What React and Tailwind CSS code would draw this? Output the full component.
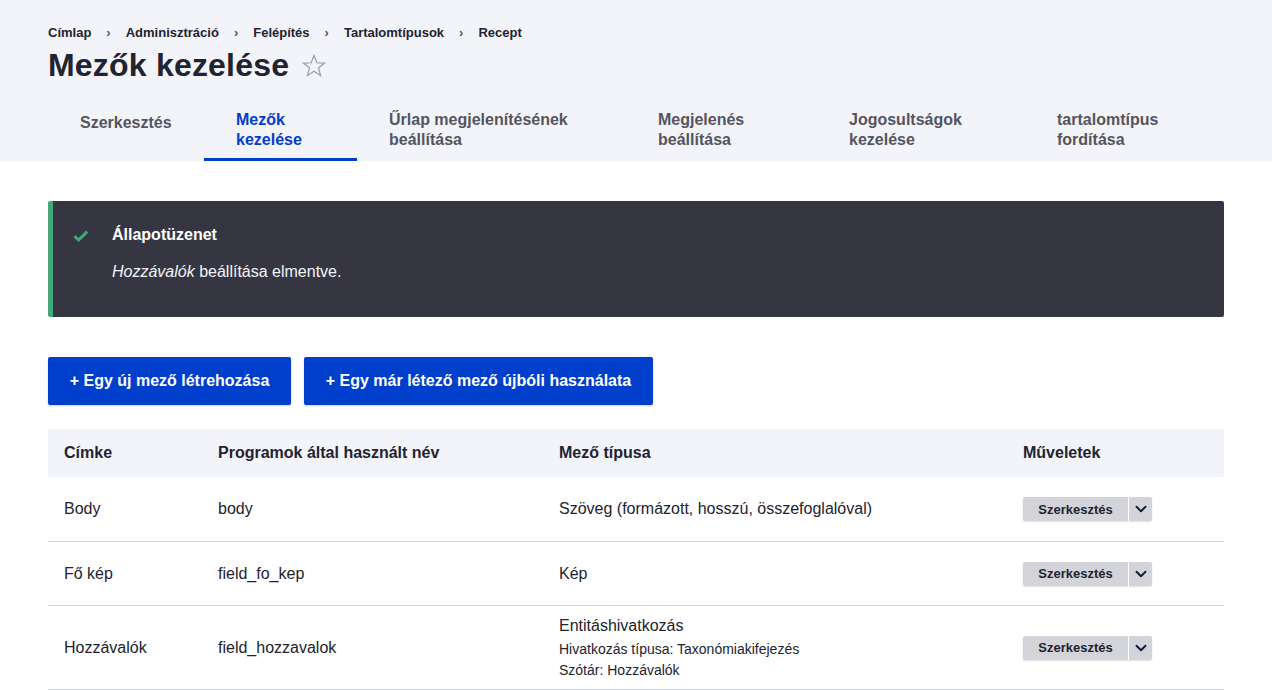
import { ChevronDown } from 'lucide-react'

const crumbs = ['Címlap', 'Adminisztráció', 'Felépítés', 'Tartalomtípusok', 'Recept']

const tabs = [
  { lines: ['Szerkesztés'], width: 'w-[156px]' },
  { lines: ['Mezők', 'kezelése'], width: 'w-[153px]', active: true },
  { lines: ['Űrlap megjelenítésének', 'beállítása'], width: 'w-[269px]' },
  { lines: ['Megjelenés', 'beállítása'], width: 'w-[191px]' },
  { lines: ['Jogosultságok', 'kezelése'], width: 'w-[208px]' },
  { lines: ['tartalomtípus', 'fordítása'], width: 'w-[199px]' }
]

const rows = [
  { label: 'Body', machine: 'body', type: 'Szöveg (formázott, hosszú, összefoglalóval)', size: 'min-h-[65px]' },
  { label: 'Fő kép', machine: 'field_fo_kep', type: 'Kép', size: 'min-h-[64px]' },
  {
    label: 'Hozzávalók',
    machine: 'field_hozzavalok',
    type: 'Entitáshivatkozás',
    extra: ['Hivatkozás típusa: Taxonómiakifejezés', 'Szótár: Hozzávalók'],
    size: 'pt-[8px] pb-[8px]'
  }
]

function Star() {
  return (
    <svg width="26" height="26" viewBox="0 0 24 24" fill="none" stroke="#9a9ca6" strokeWidth="1.1" strokeLinejoin="miter">
      <polygon points="12,2.2 14.6,9 21.8,9.3 16.1,13.8 18.1,20.9 12,16.8 5.9,20.9 7.9,13.8 2.2,9.3 9.4,9" />
    </svg>
  )
}

function Check() {
  return (
    <svg width="16" height="12" viewBox="0 0 16 12" fill="none">
      <path d="M1.5 6.2 L5.6 10 L14.2 1.6" stroke="#42a877" strokeWidth="3" />
    </svg>
  )
}

function DropButton() {
  return (
    <div className="inline-flex h-[24px] rounded-[2px] bg-[#d3d4d9] shadow-[0_1px_2px_rgba(0,0,0,0.12)]">
      <div className="w-[105px] flex items-center justify-center text-[13px] font-bold text-[#222330]">
        Szerkesztés
      </div>
      <div className="w-px bg-white" />
      <div className="w-[23px] flex items-center justify-center text-[#0f1a3a]">
        <ChevronDown className="w-[18px] h-[18px]" strokeWidth={2.5} />
      </div>
    </div>
  )
}

function App() {
  return (
    <div className="min-h-[690px] bg-white text-[#222330]" style={{ fontFamily: '"Liberation Sans", Arial, sans-serif' }}>
      {/* Header */}
      <div className="bg-[#f3f4f9] px-12 pt-[23px]">
        <nav className="flex items-center text-[13px] font-bold leading-[20px] text-[#222330]">
          {crumbs.map((c, i) => (
            <div key={c} className="flex items-center">
              <span>{c}</span>
              {i < crumbs.length - 1 && <span className="ml-[15px] mr-[15px] text-[#545560]">›</span>}
            </div>
          ))}
        </nav>
        <div className="flex items-center mt-[2px]">
          <h1 className="text-[32px] font-bold leading-[40px] tracking-[0.2px] text-[#222330]">Mezők kezelése</h1>
          <div className="ml-[12px] mt-[1px]">
            <Star />
          </div>
        </div>
        <div className="flex mt-[12px] h-[64px]">
          {tabs.map((tab) => (
            <div
              key={tab.lines.join(' ')}
              className={`${tab.width} px-8 text-base font-bold leading-[20px] ${
                tab.active ? 'text-[#003ecc] border-b-[3px] border-[#003ecc]' : 'text-[#545560]'
              } ${tab.lines.length === 1 ? 'pt-[16px]' : 'pt-[13px]'}`}
            >
              {tab.lines.map((l) => (
                <div key={l} className="whitespace-nowrap">{l}</div>
              ))}
            </div>
          ))}
        </div>
      </div>

      <div className="px-12 pt-10">
        {/* Status message */}
        <div className="flex bg-[#353641] rounded-[2px] border-l-[5px] border-[#42a877] pl-[20px] pt-[22px] pb-[33px] text-white">
          <div className="w-[39px] pt-[7px]">
            <Check />
          </div>
          <div>
            <div className="text-base font-bold leading-[24px]">Állapotüzenet</div>
            <div className="text-base leading-[24px] mt-[13px] text-[#f3f4f9]">
              <em>Hozzávalók</em> beállítása elmentve.
            </div>
          </div>
        </div>

        {/* Action buttons */}
        <div className="flex gap-[13px] mt-10">
          <button className="h-12 w-[243px] flex items-center justify-center bg-[#003ecc] text-white text-base font-bold rounded-[2px] shadow-[0_1px_2px_rgba(0,0,0,0.2)]">
            + Egy új mező létrehozása
          </button>
          <button className="h-12 w-[349px] flex items-center justify-center bg-[#003ecc] text-white text-base font-bold rounded-[2px] shadow-[0_1px_2px_rgba(0,0,0,0.2)]">
            + Egy már létező mező újbóli használata
          </button>
        </div>

        {/* Fields table */}
        <div className="mt-6">
          <div className="grid grid-cols-[154px_341px_464px_217px] h-12 items-center bg-[#f3f4f9] text-base font-bold">
            <div className="px-4">Címke</div>
            <div className="px-4">Programok által használt név</div>
            <div className="px-4">Mező típusa</div>
            <div className="px-4">Műveletek</div>
          </div>
          {rows.map((row) => (
            <div
              key={row.machine}
              className={`grid grid-cols-[154px_341px_464px_217px] ${row.size} items-center border-b border-[#d3d4d9] text-base`}
            >
              <div className="px-4 leading-[24px]">{row.label}</div>
              <div className="px-4 leading-[24px]">{row.machine}</div>
              <div className="px-4">
                <div className="leading-[24px]">{row.type}</div>
                {row.extra && (
                  <div className="mt-[1px]">
                    {row.extra.map((e) => (
                      <div key={e} className="text-sm leading-[21px]">{e}</div>
                    ))}
                  </div>
                )}
              </div>
              <div className="px-4">
                <DropButton />
              </div>
            </div>
          ))}
        </div>
      </div>
    </div>
  )
}

export default App
